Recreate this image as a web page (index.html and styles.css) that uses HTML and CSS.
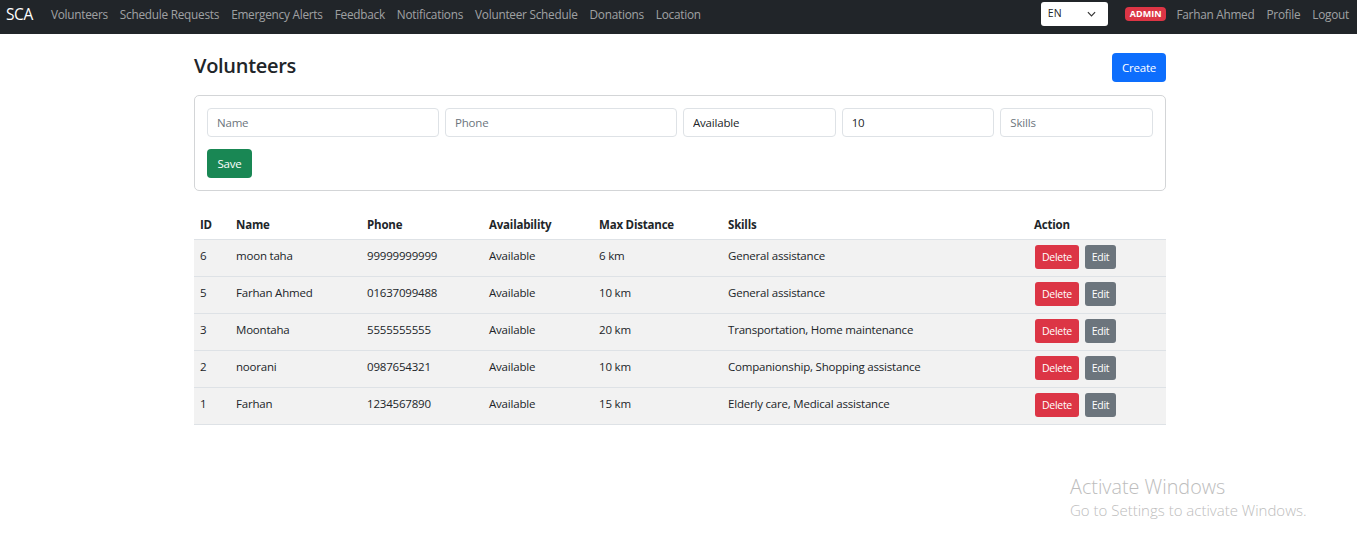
FILE: index.html
```html
<!DOCTYPE html>
<html lang="en">
<head>
<meta charset="utf-8">
<title>Volunteers</title>
<link rel="stylesheet" href="styles.css">
</head>
<body>
<nav class="navbar">
  <a class="brand" href="#">SCA</a>
  <ul class="nav-links">
    <li><a href="#">Volunteers</a></li>
    <li><a href="#">Schedule Requests</a></li>
    <li><a href="#">Emergency Alerts</a></li>
    <li><a href="#">Feedback</a></li>
    <li><a href="#">Notifications</a></li>
    <li><a href="#">Volunteer Schedule</a></li>
    <li><a href="#">Donations</a></li>
    <li><a href="#">Location</a></li>
  </ul>
  <div class="nav-right">
    <div class="lang-select">
      <span>EN</span>
      <svg class="chev" width="9" height="6" viewBox="0 0 10 6"><path d="M1 1l4 4 4-4" fill="none" stroke="#333" stroke-width="1.3"/></svg>
    </div>
    <span class="badge">ADMIN</span>
    <a class="user-link" href="#">Farhan Ahmed</a>
    <a class="user-link" href="#">Profile</a>
    <a class="user-link" href="#">Logout</a>
  </div>
</nav>

<main class="container">
  <div class="page-head">
    <h1>Volunteers</h1>
    <button class="btn btn-primary btn-create">Create</button>
  </div>

  <form class="card">
    <div class="form-grid">
      <input class="form-control" placeholder="Name">
      <input class="form-control" placeholder="Phone">
      <input class="form-control" value="Available">
      <input class="form-control" value="10">
      <input class="form-control" placeholder="Skills">
    </div>
    <button type="button" class="btn btn-success btn-save">Save</button>
  </form>

  <table class="table">
    <thead>
      <tr>
        <th class="c-id">ID</th>
        <th class="c-name">Name</th>
        <th class="c-phone">Phone</th>
        <th class="c-avail">Availability</th>
        <th class="c-dist">Max Distance</th>
        <th class="c-skills">Skills</th>
        <th class="c-action">Action</th>
      </tr>
    </thead>
    <tbody>
      <tr><td>6</td><td>moon taha</td><td>99999999999</td><td>Available</td><td>6 km</td><td>General assistance</td><td class="actions"><button class="btn btn-danger btn-sm">Delete</button><button class="btn btn-secondary btn-sm">Edit</button></td></tr>
      <tr><td>5</td><td>Farhan Ahmed</td><td>01637099488</td><td>Available</td><td>10 km</td><td>General assistance</td><td class="actions"><button class="btn btn-danger btn-sm">Delete</button><button class="btn btn-secondary btn-sm">Edit</button></td></tr>
      <tr><td>3</td><td>Moontaha</td><td>5555555555</td><td>Available</td><td>20 km</td><td>Transportation, Home maintenance</td><td class="actions"><button class="btn btn-danger btn-sm">Delete</button><button class="btn btn-secondary btn-sm">Edit</button></td></tr>
      <tr><td>2</td><td>noorani</td><td>0987654321</td><td>Available</td><td>10 km</td><td>Companionship, Shopping assistance</td><td class="actions"><button class="btn btn-danger btn-sm">Delete</button><button class="btn btn-secondary btn-sm">Edit</button></td></tr>
      <tr><td>1</td><td>Farhan</td><td>1234567890</td><td>Available</td><td>15 km</td><td>Elderly care, Medical assistance</td><td class="actions"><button class="btn btn-danger btn-sm">Delete</button><button class="btn btn-secondary btn-sm">Edit</button></td></tr>
    </tbody>
  </table>
</main>

<div class="watermark">
  <div class="wm-title">Activate Windows</div>
  <div class="wm-sub">Go to Settings to activate Windows.</div>
</div>
</body>
</html>
```

FILE: styles.css
```css
* { box-sizing: border-box; }

html, body {
  margin: 0;
  padding: 0;
}

body {
  font-family: "Open Sans", "Noto Sans", "Liberation Sans", sans-serif;
  font-size: 11.5px;
  color: #212529;
  background: #fff;
  width: 1357px;
  height: 544px;
  position: relative;
  overflow: hidden;
}

a { text-decoration: none; }

/* Navbar */
.navbar {
  height: 34px;
  background: #212529;
  display: flex;
  align-items: flex-start;
  padding: 0 2px 0 6px;
}

.brand {
  color: #fff;
  font-size: 15.5px;
  line-height: 20px;
  margin-top: 4px;
  margin-right: 12px;
  letter-spacing: -0.4px;
}

.nav-links {
  list-style: none;
  display: flex;
  margin: 0;
  padding: 0;
}

.nav-links a {
  display: block;
  color: rgba(255, 255, 255, 0.58);
  font-size: 11.8px;
  line-height: 18px;
  margin-top: 5px;
  padding: 0 6px;
  letter-spacing: -0.25px;
}

.nav-right {
  margin-left: auto;
  display: flex;
  align-items: center;
  height: 27px;
}

.lang-select {
  width: 67px;
  height: 24px;
  background: #fff;
  border-radius: 3px;
  display: flex;
  align-items: center;
  justify-content: space-between;
  padding: 0 12px 0 7px;
  font-size: 10.5px;
  color: #212529;
  margin-right: 17px;
}

.lang-select span { margin-top: -2px; }

.badge {
  background: #dc3545;
  color: #fff;
  font-size: 9px;
  font-weight: 700;
  padding: 2px 5px;
  border-radius: 4px;
  line-height: 10px;
  margin-right: 4px;
  margin-top: 1px;
}

.user-link {
  color: rgba(255, 255, 255, 0.58);
  font-size: 11.8px;
  line-height: 18px;
  margin-top: 1px;
  padding: 0 6px;
  letter-spacing: -0.25px;
}

/* Main */
.container {
  width: 972px;
  margin: 0 0 0 194px;
}

.page-head {
  display: flex;
  justify-content: space-between;
  align-items: flex-end;
  padding-top: 19px;
  margin-bottom: 13px;
}

h1 {
  margin: 0;
  font-size: 20px;
  font-weight: 600;
  line-height: 26px;
  letter-spacing: -0.3px;
  margin-bottom: 3px;
}

.btn {
  border: 1px solid transparent;
  border-radius: 4px;
  color: #fff;
  font-family: inherit;
  font-size: 11.5px;
  height: 29px;
  padding: 0 9px;
  cursor: pointer;
  letter-spacing: -0.2px;
}

.btn-primary { background: #0d6efd; }
.btn-success { background: #198754; }
.btn-danger { background: #dc3545; }
.btn-secondary { background: #6c757d; }

.btn-create { width: 54px; padding: 0; }

.card {
  border: 1px solid #d3d5d7;
  border-radius: 5px;
  padding: 12px;
  margin: 0 0 20px;
}

.form-grid {
  display: grid;
  grid-template-columns: 232px 232px 1fr 1fr 1fr;
  gap: 6px;
  margin-bottom: 12px;
}

.form-control {
  height: 29px;
  border: 1px solid #dee2e6;
  border-radius: 4px;
  padding: 0 9px;
  font-family: inherit;
  font-size: 11.5px;
  color: #212529;
  background: #fff;
  width: 100%;
  letter-spacing: -0.2px;
}

.form-control::placeholder { color: #6c757d; }

.btn-save { width: 45px; padding: 0; }

/* Table */
.table {
  width: 100%;
  border-collapse: collapse;
  table-layout: fixed;
}

.table th {
  text-align: left;
  font-weight: 700;
  font-size: 11.5px;
  height: 28px;
  padding: 0 6px;
  border-bottom: 1px solid #dee2e6;
  vertical-align: middle;
  letter-spacing: -0.2px;
}

.table td {
  background: #f2f2f2;
  height: 37px;
  padding: 0 6px 4px;
  border-bottom: 1px solid #dee2e6;
  vertical-align: middle;
  font-size: 11.5px;
  letter-spacing: -0.2px;
}

.c-id { width: 36px; }
.c-name { width: 131px; }
.c-phone { width: 122px; }
.c-avail { width: 110px; }
.c-dist { width: 129px; }
.c-skills { width: 306px; }
.c-action { width: 138px; }

.table td.actions { padding: 0 6px 2px 7px; }

.btn-sm {
  height: 24px;
  font-size: 10.5px;
  padding: 0 5px;
  border-radius: 3px;
  margin-right: 6px;
  vertical-align: middle;
  letter-spacing: -0.3px;
}

.btn-sm.btn-danger { width: 44px; padding: 0; }
.btn-sm.btn-secondary { width: 31px; padding: 0; }

/* Windows watermark overlay */
.watermark {
  position: absolute;
  left: 1070px;
  top: 475px;
  color: #bdbdbd;
  font-family: "Open Sans", "Noto Sans", sans-serif;
  font-weight: 300;
}

.wm-title { font-size: 19.8px; line-height: 24px; }
.wm-sub { font-size: 15px; line-height: 22px; }
```
